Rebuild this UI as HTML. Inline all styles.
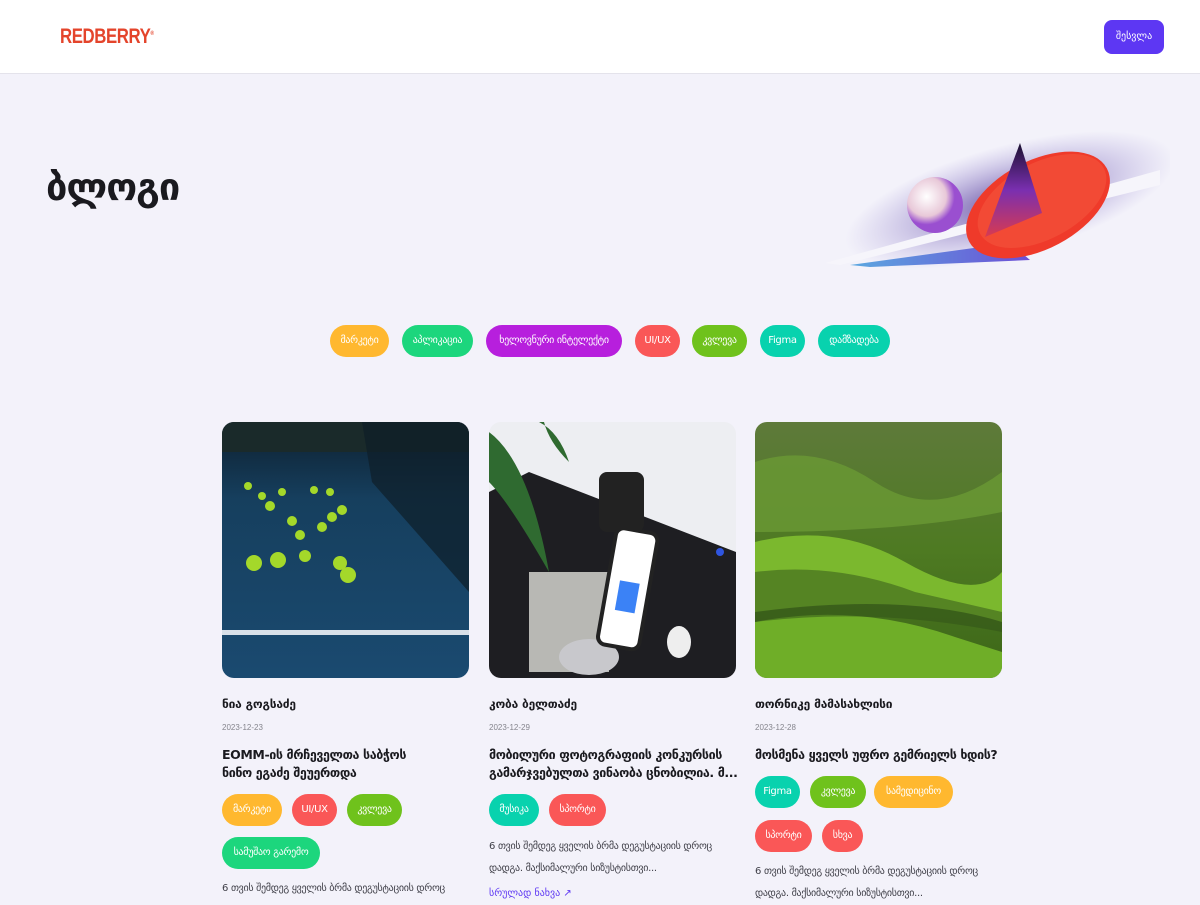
<!DOCTYPE html>
<html><head><meta charset="utf-8">
<style>
*{margin:0;padding:0;box-sizing:border-box}
body{width:1200px;height:900px;overflow:hidden;background:#F3F2FA;font-family:"Liberation Sans","DejaVu Sans",sans-serif;position:relative;color:#1A1A1F}
.hdr{position:absolute;left:0;top:0;width:1200px;height:74px;background:#fff;border-bottom:1px solid #E4E3EB}
.logo{position:absolute;left:60px;top:25px;font-family:"Liberation Sans",sans-serif;font-weight:bold;font-size:21px;color:#E4442B;letter-spacing:-0.5px;transform:scaleX(0.8);transform-origin:left}
.btn{position:absolute;left:1104px;top:20px;width:60px;height:34px;background:#5D37F3;border-radius:8px;color:#fff;font-size:10px;text-align:center;line-height:34px;font-family:"DejaVu Sans",sans-serif}
h1{position:absolute;left:46px;top:165px;font-size:38px;font-weight:bold;font-family:"DejaVu Sans",sans-serif;letter-spacing:-1px}
.tag{position:absolute;height:32px;border-radius:16px;color:#fff;font-size:10px;line-height:32px;text-align:center;white-space:nowrap;font-family:"DejaVu Sans",sans-serif;letter-spacing:-0.3px}
.o{background:#FFB82F}.g{background:#1CD67D}.p{background:#B71FDD}.r{background:#FA5757}.l{background:#6FC21C}.t{background:#08D2AE}
.img{position:absolute;top:422px;width:247px;height:256px;border-radius:12px;overflow:hidden}
.nm{position:absolute;font-size:12px;font-weight:bold;font-family:"DejaVu Sans",sans-serif;white-space:nowrap;letter-spacing:-0.2px}
.dt{position:absolute;font-size:8px;color:#85858D}
.ti{position:absolute;font-size:12.5px;font-weight:bold;line-height:18px;font-family:"DejaVu Sans",sans-serif;white-space:nowrap;letter-spacing:-0.4px}
.ds{position:absolute;font-size:10px;color:#404049;line-height:22px;white-space:nowrap;font-family:"DejaVu Sans",sans-serif;letter-spacing:-0.3px}
.lk{position:absolute;font-size:10px;color:#5D37F3;white-space:nowrap;font-family:"DejaVu Sans",sans-serif}
</style></head><body>
<div class="hdr"><div class="logo">REDBERRY<sup style="font-size:6px">®</sup></div><div class="btn">შესვლა</div></div>
<h1>ბლოგი</h1>
<svg style="position:absolute;left:810px;top:125px" width="360" height="150" viewBox="0 0 360 150">
<defs>
<radialGradient id="sh" cx="0.5" cy="0.5" r="0.5"><stop offset="0" stop-color="#4A2F8F" stop-opacity="0.8"/><stop offset="1" stop-color="#8B7AD0" stop-opacity="0"/></radialGradient>
<linearGradient id="bl" x1="0" x2="1"><stop offset="0" stop-color="#5BA8E0"/><stop offset="1" stop-color="#6C4FD6"/></linearGradient>
<radialGradient id="sp" cx="0.35" cy="0.35"><stop offset="0" stop-color="#fff"/><stop offset="0.7" stop-color="#E8C8D8"/><stop offset="1" stop-color="#9A4FD0"/></radialGradient>
<linearGradient id="cn" x1="0" y1="0" x2="0" y2="1"><stop offset="0" stop-color="#1A1030"/><stop offset="0.5" stop-color="#7A2FB0"/><stop offset="1" stop-color="#D83A50"/></linearGradient>
</defs>
<ellipse cx="200" cy="75" rx="170" ry="55" fill="url(#sh)" transform="rotate(-15 200 75)"/>
<polygon points="15,138 350,45 350,60 30,140" fill="#F6F5FB"/>
<polygon points="40,140 200,118 220,135 60,142" fill="url(#bl)"/>
<circle cx="125" cy="80" r="28" fill="url(#sp)"/>
<ellipse cx="228" cy="80" rx="78" ry="44" fill="#EF3A2A" transform="rotate(-28 228 80)"/>
<ellipse cx="232" cy="76" rx="70" ry="38" fill="#F24A35" transform="rotate(-28 232 76)"/>
<polygon points="210,18 175,112 232,88" fill="url(#cn)"/>
</svg>
<div class="tag o" style="left:330px;top:325px;width:59px">მარკეტი</div>
<div class="tag g" style="left:402px;top:325px;width:71px">აპლიკაცია</div>
<div class="tag p" style="left:486px;top:325px;width:136px">ხელოვნური ინტელექტი</div>
<div class="tag r" style="left:635px;top:325px;width:45px">UI/UX</div>
<div class="tag l" style="left:692px;top:325px;width:55px">კვლევა</div>
<div class="tag t" style="left:760px;top:325px;width:45px">Figma</div>
<div class="tag t" style="left:818px;top:325px;width:72px">დამზადება</div>

<div class="img" style="left:222px">
<svg width="247" height="256"><defs><linearGradient id="c1" x1="0" y1="0" x2="0" y2="1"><stop offset="0" stop-color="#0D1F2E"/><stop offset="0.3" stop-color="#163F5E"/><stop offset="1" stop-color="#1A4A70"/></linearGradient></defs>
<rect width="247" height="256" fill="url(#c1)"/><rect y="0" width="247" height="30" fill="#1a2a2a"/>
<rect x="0" y="208" width="247" height="5" fill="#D8E0E8"/>
<polygon points="140,0 247,0 247,170 150,60" fill="#0E1E28" opacity="0.7"/>
<g fill="#A4D82A"><circle cx="32" cy="141" r="8"/><circle cx="56" cy="138" r="8"/><circle cx="118" cy="141" r="7"/><circle cx="126" cy="153" r="8"/><circle cx="83" cy="134" r="6"/><circle cx="78" cy="113" r="5"/><circle cx="70" cy="99" r="5"/><circle cx="48" cy="84" r="5"/><circle cx="100" cy="105" r="5"/><circle cx="110" cy="95" r="5"/><circle cx="120" cy="88" r="5"/><circle cx="26" cy="64" r="4"/><circle cx="60" cy="70" r="4"/><circle cx="40" cy="74" r="4"/><circle cx="92" cy="68" r="4"/><circle cx="108" cy="70" r="4"/></g></svg></div>
<div class="img" style="left:489px">
<svg width="247" height="256"><rect width="247" height="256" fill="#EDEEF2"/>
<polygon points="40,50 247,130 247,256 0,256 0,70" fill="#1E1E22"/>
<rect x="40" y="150" width="80" height="100" fill="#B8B8B4"/>
<ellipse cx="100" cy="235" rx="30" ry="18" fill="#C8C8CC"/>
<rect x="110" y="50" width="45" height="60" rx="8" fill="#222"/>
<rect x="118" y="108" width="42" height="118" rx="8" fill="#fff" stroke="#222" stroke-width="4" transform="rotate(10 140 165)"/>
<rect x="130" y="160" width="20" height="30" fill="#3B82F6" transform="rotate(10 140 165)"/>
<ellipse cx="190" cy="220" rx="12" ry="16" fill="#eee"/>
<path d="M0,10 Q40,40 60,150 Q20,80 0,60Z" fill="#2F6A30"/><path d="M50,0 Q70,10 80,40 Q60,20 55,0Z" fill="#2F6A30"/>
<circle cx="231" cy="130" r="4" fill="#2F55E0"/></svg></div>
<div class="img" style="left:755px">
<svg width="247" height="256"><defs><linearGradient id="c3" x1="0" y1="0" x2="0" y2="1"><stop offset="0" stop-color="#5E7A3A"/><stop offset="0.5" stop-color="#4E7A22"/><stop offset="1" stop-color="#3C6618"/></linearGradient></defs>
<rect width="247" height="256" fill="url(#c3)"/>
<path d="M0,120 Q80,100 150,140 T247,150 L247,200 Q150,170 0,190Z" fill="#7BB82E"/>
<path d="M0,200 Q100,180 200,215 L247,230 L247,256 L0,256Z" fill="#6FAE28"/>
<path d="M0,40 Q60,20 120,60 T247,50 L247,90 Q150,110 0,110Z" fill="#6A9A35" opacity="0.8"/>
<path d="M0,150 Q80,140 160,170 L247,190 L247,210 Q120,185 0,200Z" fill="#2F4F18" opacity="0.5"/></svg></div>

<div class="nm" style="left:222px;top:697px">ნია გოგსაძე</div>
<div class="dt" style="left:222px;top:723px">2023-12-23</div>
<div class="ti" style="left:222px;top:746px">EOMM-ის მრჩეველთა საბჭოს<br>ნინო ეგაძე შეუერთდა</div>
<div class="tag o" style="left:222px;top:794px;width:60px">მარკეტი</div>
<div class="tag r" style="left:292px;top:794px;width:45px">UI/UX</div>
<div class="tag l" style="left:347px;top:794px;width:55px">კვლევა</div>
<div class="tag g" style="left:222px;top:837px;width:98px">სამუშაო გარემო</div>
<div class="ds" style="left:222px;top:878px">6 თვის შემდეგ ყველის ბრმა დეგუსტაციის დროც</div>

<div class="nm" style="left:489px;top:697px">კობა ბელთაძე</div>
<div class="dt" style="left:489px;top:723px">2023-12-29</div>
<div class="ti" style="left:489px;top:746px">მობილური ფოტოგრაფიის კონკურსის<br>გამარჯვებულთა ვინაობა ცნობილია. მ...</div>
<div class="tag t" style="left:489px;top:794px;width:50px">მუსიკა</div>
<div class="tag r" style="left:549px;top:794px;width:57px">სპორტი</div>
<div class="ds" style="left:489px;top:836px">6 თვის შემდეგ ყველის ბრმა დეგუსტაციის დროც<br>დადგა. მაქსიმალური სიზუსტისთვი...</div>
<div class="lk" style="left:489px;top:888px">სრულად ნახვა ↗</div>

<div class="nm" style="left:755px;top:697px">თორნიკე მამასახლისი</div>
<div class="dt" style="left:755px;top:723px">2023-12-28</div>
<div class="ti" style="left:755px;top:746px">მოსმენა ყველს უფრო გემრიელს ხდის?</div>
<div class="tag t" style="left:755px;top:776px;width:45px">Figma</div>
<div class="tag l" style="left:810px;top:776px;width:56px">კვლევა</div>
<div class="tag o" style="left:874px;top:776px;width:79px">სამედიცინო</div>
<div class="tag r" style="left:755px;top:820px;width:57px">სპორტი</div>
<div class="tag r" style="left:822px;top:820px;width:41px">სხვა</div>
<div class="ds" style="left:755px;top:861px">6 თვის შემდეგ ყველის ბრმა დეგუსტაციის დროც<br>დადგა. მაქსიმალური სიზუსტისთვი...</div>
</body></html>
